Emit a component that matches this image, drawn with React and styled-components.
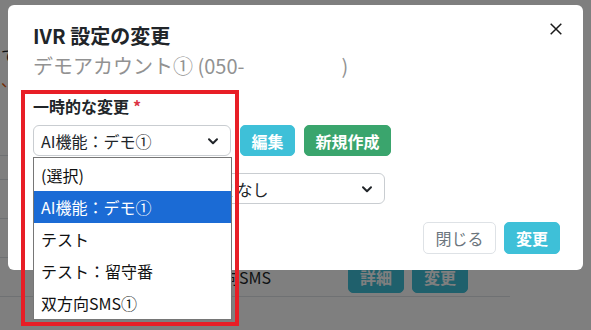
import React from 'react';
import styled, { createGlobalStyle } from 'styled-components';

const font = `"Noto Sans CJK JP", "Noto Sans", sans-serif`;

const Global = createGlobalStyle`
  html, body { margin: 0; padding: 0; }
  body { font-family: ${font}; font-size: 16px; color: #212529; background: #fff; }
  * { box-sizing: border-box; }
`;

const Screen = styled.div`
  position: relative;
  width: 591px;
  height: 330px;
  overflow: hidden;
  background: #fff;
`;

/* page behind the modal */
const Page = styled.div`
  display: flex;
  flex-direction: column;
  width: 510px;
`;

const Intro = styled.div`
  height: 155px;
  padding: 43px 0 0 1px;
  line-height: 24px;
`;

const Note = styled.div`
  color: ${(p) => (p.$alert ? '#e8590c' : '#212529')};
`;

const Table = styled.div`
  border-top: 1px solid #dee2e6;
`;

const TableRow = styled.div`
  display: grid;
  grid-template-columns: 191px 157px auto;
  align-items: center;
  height: ${(p) => p.$h}px;
  border-bottom: 1px solid #dee2e6;
  line-height: 24px;
`;

const Actions = styled.div`
  display: flex;
  gap: 8px;
`;

const Backdrop = styled.div`
  position: absolute;
  inset: 0;
  background: rgba(0, 0, 0, 0.5);
`;

/* modal */
const Modal = styled.div`
  position: absolute;
  left: 8px;
  top: 5px;
  width: 575px;
  height: 265px;
  background: #fff;
  border-radius: 6px;
  display: flex;
  flex-direction: column;
`;

const Header = styled.div`
  display: flex;
  justify-content: space-between;
  padding: 16px 15px 0 25px;
`;

const Title = styled.h5`
  margin: 0;
  font-size: 20px;
  font-weight: 700;
  line-height: 30px;
`;

const Sub = styled.div`
  font-size: 20px;
  line-height: 30px;
  color: #929292;
`;

const Blank = styled.span`
  display: inline-block;
  width: 97px;
`;

const Close = styled.button`
  width: 24px;
  height: 24px;
  margin-top: -4px;
  padding: 0;
  border: 0;
  background: none;
  display: flex;
  align-items: center;
  justify-content: center;
`;

const Body = styled.div`
  padding: 13px 23px 0 25px;
  display: flex;
  flex-direction: column;
`;

const Label = styled.div`
  font-weight: 700;
  line-height: 24px;
  margin-bottom: 7px;
`;

const Req = styled.span`
  color: #dc3545;
  margin-left: 4px;
`;

const Row = styled.div`
  display: flex;
  gap: 9px;
  margin-bottom: ${(p) => p.$mb || 0}px;
`;

const SelectWrap = styled.div`
  position: relative;
`;

const Select = styled.div`
  width: ${(p) => p.$w}px;
  height: 31px;
  border: 1px solid #c9cdd1;
  border-radius: 6px;
  display: flex;
  align-items: center;
  justify-content: space-between;
  padding: 0 11px 0 7px;
  line-height: 24px;
  white-space: nowrap;
  overflow: hidden;
`;

const Btn = styled.button`
  height: ${(p) => p.$h || 31}px;
  padding: 0 ${(p) => p.$px || 10.5}px;
  border-radius: 5px;
  font-family: ${font};
  font-size: 16px;
  font-weight: 700;
  line-height: 24px;
  color: #fff;
  border: 1px solid ${(p) => p.$bg};
  background: ${(p) => p.$bg};
`;

const GhostBtn = styled.button`
  height: 32px;
  padding: 0 11.5px;
  border-radius: 5px;
  font-family: ${font};
  font-size: 16px;
  line-height: 24px;
  color: #6c757d;
  background: #fff;
  border: 1px solid #dee2e6;
`;

const Menu = styled.ul`
  position: absolute;
  left: 0;
  top: calc(100% + 1px);
  width: 199px;
  margin: 0;
  padding: 1px 0 0;
  list-style: none;
  background: #fff;
  border: 1px solid #767676;
  z-index: 2;
`;

const Option = styled.li`
  height: 32px;
  padding: 0 7px;
  display: flex;
  align-items: center;
  line-height: 24px;
  white-space: nowrap;
  color: ${(p) => (p.$active ? '#fff' : '#111')};
  background: ${(p) => (p.$active ? '#1b6bd5' : 'transparent')};
`;

const Footer = styled.div`
  margin-top: auto;
  display: flex;
  justify-content: flex-end;
  gap: 8px;
  padding: 0 23px 16px 0;
`;

const Marker = styled.div`
  position: absolute;
  left: 21px;
  top: 90px;
  width: 218px;
  height: 236px;
  border: 4px solid #e81e26;
  z-index: 3;
`;

const Chevron = () => (
  <svg width="12" height="12" viewBox="0 0 12 12">
    <path d="M2 4.2l4 4 4-4" fill="none" stroke="#212529" strokeWidth="2" strokeLinecap="round" strokeLinejoin="round" />
  </svg>
);

const CloseIcon = () => (
  <svg width="12" height="12" viewBox="0 0 12 12">
    <path d="M0.7 0.7l10.6 10.6M11.3 0.7L0.7 11.3" stroke="#1a1a1a" strokeWidth="1.5" />
  </svg>
);

const options = ['(選択)', 'AI機能：デモ①', 'テスト', 'テスト：留守番', '双方向SMS①'];

export default function App() {
  return (
    <Screen>
      <Global />
      <Page>
        <Intro>
          <Note>てください。</Note>
          <Note $alert>、下記の設定</Note>
        </Intro>
        <Table>
          <TableRow $h={24} />
          <TableRow $h={39} />
          <TableRow $h={39} />
          <TableRow $h={39}>
            <span />
            <span>双方向SMS</span>
            <Actions>
              <Btn $bg="#3ec0d8" $px={11}>詳細</Btn>
              <Btn $bg="#3ec0d8" $px={11}>変更</Btn>
            </Actions>
          </TableRow>
        </Table>
      </Page>
      <Backdrop />
      <Modal>
        <Header>
          <div>
            <Title>IVR 設定の変更</Title>
            <Sub>
              デモアカウント① (050-<Blank />)
            </Sub>
          </div>
          <Close aria-label="閉じる">
            <CloseIcon />
          </Close>
        </Header>
        <Body>
          <Label>
            一時的な変更<Req>*</Req>
          </Label>
          <Row $mb={17}>
            <SelectWrap>
              <Select $w={198}>
                <span>AI機能：デモ①</span>
                <Chevron />
              </Select>
              <Menu>
                {options.map((o) => (
                  <Option key={o} $active={o === 'AI機能：デモ①'}>
                    {o}
                  </Option>
                ))}
              </Menu>
            </SelectWrap>
            <Btn $bg="#3ec0d8">編集</Btn>
            <Btn $bg="#3aa56d">新規作成</Btn>
          </Row>
          <Row>
            <Select $w={352}>
              <span>自動で元に戻す時刻の指定 なし</span>
              <Chevron />
            </Select>
          </Row>
        </Body>
        <Footer>
          <GhostBtn>閉じる</GhostBtn>
          <Btn $bg="#3ec0d8" $h={32} $px={11}>変更</Btn>
        </Footer>
      </Modal>
      <Marker />
    </Screen>
  );
}
